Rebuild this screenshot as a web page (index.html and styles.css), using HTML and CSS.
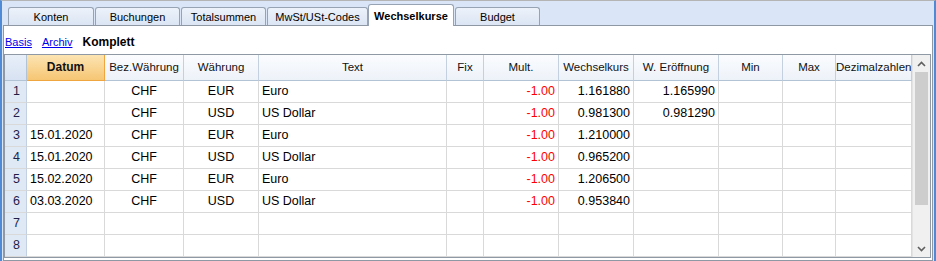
FILE: index.html
```html
<!DOCTYPE html>
<html lang="de">
<head>
    <meta charset="UTF-8">
    <meta name="viewport" content="width=device-width, initial-scale=1.0">
    <title>Wechselkurse</title>
    <link rel="stylesheet" href="styles.css">
</head>
<body>
    <div class="window">
        <div class="tabs">
            <div class="tab tab-first">Konten</div>
            <div class="tab">Buchungen</div>
            <div class="tab">Totalsummen</div>
            <div class="tab tab-wide">MwSt/USt-Codes</div>
            <div class="tab active">Wechselkurse</div>
            <div class="tab">Budget</div>
        </div>

        <div class="panel">
            <div class="views">
                <a href="#">Basis</a>
                <a href="#">Archiv</a>
                <span class="current">Komplett</span>
            </div>

            <div class="grid-frame">
                <div class="grid">
                    <div class="hd corner"></div>
                    <div class="hd sorted">Datum</div>
                    <div class="hd">Bez.Währung</div>
                    <div class="hd">Währung</div>
                    <div class="hd">Text</div>
                    <div class="hd">Fix</div>
                    <div class="hd">Mult.</div>
                    <div class="hd">Wechselkurs</div>
                    <div class="hd">W. Eröffnung</div>
                    <div class="hd">Min</div>
                    <div class="hd">Max</div>
                    <div class="hd">Dezimalzahlen</div>

                    <div class="cell rownum">1</div>
                    <div class="cell"></div>
                    <div class="cell center">CHF</div>
                    <div class="cell center">EUR</div>
                    <div class="cell">Euro</div>
                    <div class="cell"></div>
                    <div class="cell right neg">-1.00</div>
                    <div class="cell right">1.161880</div>
                    <div class="cell right">1.165990</div>
                    <div class="cell"></div>
                    <div class="cell"></div>
                    <div class="cell"></div>

                    <div class="cell rownum">2</div>
                    <div class="cell"></div>
                    <div class="cell center">CHF</div>
                    <div class="cell center">USD</div>
                    <div class="cell">US Dollar</div>
                    <div class="cell"></div>
                    <div class="cell right neg">-1.00</div>
                    <div class="cell right">0.981300</div>
                    <div class="cell right">0.981290</div>
                    <div class="cell"></div>
                    <div class="cell"></div>
                    <div class="cell"></div>

                    <div class="cell rownum">3</div>
                    <div class="cell">15.01.2020</div>
                    <div class="cell center">CHF</div>
                    <div class="cell center">EUR</div>
                    <div class="cell">Euro</div>
                    <div class="cell"></div>
                    <div class="cell right neg">-1.00</div>
                    <div class="cell right">1.210000</div>
                    <div class="cell"></div>
                    <div class="cell"></div>
                    <div class="cell"></div>
                    <div class="cell"></div>

                    <div class="cell rownum">4</div>
                    <div class="cell">15.01.2020</div>
                    <div class="cell center">CHF</div>
                    <div class="cell center">USD</div>
                    <div class="cell">US Dollar</div>
                    <div class="cell"></div>
                    <div class="cell right neg">-1.00</div>
                    <div class="cell right">0.965200</div>
                    <div class="cell"></div>
                    <div class="cell"></div>
                    <div class="cell"></div>
                    <div class="cell"></div>

                    <div class="cell rownum">5</div>
                    <div class="cell">15.02.2020</div>
                    <div class="cell center">CHF</div>
                    <div class="cell center">EUR</div>
                    <div class="cell">Euro</div>
                    <div class="cell"></div>
                    <div class="cell right neg">-1.00</div>
                    <div class="cell right">1.206500</div>
                    <div class="cell"></div>
                    <div class="cell"></div>
                    <div class="cell"></div>
                    <div class="cell"></div>

                    <div class="cell rownum">6</div>
                    <div class="cell">03.03.2020</div>
                    <div class="cell center">CHF</div>
                    <div class="cell center">USD</div>
                    <div class="cell">US Dollar</div>
                    <div class="cell"></div>
                    <div class="cell right neg">-1.00</div>
                    <div class="cell right">0.953840</div>
                    <div class="cell"></div>
                    <div class="cell"></div>
                    <div class="cell"></div>
                    <div class="cell"></div>

                    <div class="cell rownum">7</div>
                    <div class="cell"></div>
                    <div class="cell"></div>
                    <div class="cell"></div>
                    <div class="cell"></div>
                    <div class="cell"></div>
                    <div class="cell"></div>
                    <div class="cell"></div>
                    <div class="cell"></div>
                    <div class="cell"></div>
                    <div class="cell"></div>
                    <div class="cell"></div>

                    <div class="cell rownum">8</div>
                    <div class="cell"></div>
                    <div class="cell"></div>
                    <div class="cell"></div>
                    <div class="cell"></div>
                    <div class="cell"></div>
                    <div class="cell"></div>
                    <div class="cell"></div>
                    <div class="cell"></div>
                    <div class="cell"></div>
                    <div class="cell"></div>
                    <div class="cell"></div>
                </div>
                <div class="scrollbar">
                    <div class="scroll-btn">
                        <svg width="9" height="6" viewBox="0 0 9 6"><polyline points="1,5 4.5,1.5 8,5" fill="none" stroke="#5f5f5f" stroke-width="1.6"/></svg>
                    </div>
                    <div class="scroll-track">
                        <div class="scroll-thumb"></div>
                    </div>
                    <div class="scroll-btn">
                        <svg width="9" height="6" viewBox="0 0 9 6"><polyline points="1,1 4.5,4.5 8,1" fill="none" stroke="#5f5f5f" stroke-width="1.6"/></svg>
                    </div>
                </div>
            </div>
        </div>
    </div>
</body>
</html>
```

FILE: styles.css
```css
body {
    margin: 0;
    font-family: "Liberation Sans", Arial, sans-serif;
    background: #fff;
    overflow: hidden;
}

.window {
    width: 936px;
    height: 261px;
    box-sizing: border-box;
    background-color: #dae6f8;
    border-top: 1px solid #b4b4b4;
    border-left: 2px solid #4f8ad6;
    border-right: 2px solid #4f8ad6;
}

/* tab strip */
.tabs {
    display: flex;
    align-items: flex-end;
    gap: 1px;
    height: 24px;
    padding-left: 6px;
}
.tab {
    width: 85px;
    height: 18px;
    box-sizing: border-box;
    border: 1px solid #97a3b3;
    border-bottom: none;
    border-radius: 3px 3px 0 0;
    background: linear-gradient(#edf2fa, #dbe5f4);
    font-size: 11px;
    line-height: 18px;
    text-align: center;
    color: #000;
}
.tab-first {
    width: 86px;
}
.tab-wide {
    width: 101px;
}
.tab.active {
    position: relative;
    width: 86px;
    height: 22px;
    margin-left: -1px;
    margin-bottom: -1px;
    background: #fff;
    font-weight: bold;
    line-height: 22px;
}

.panel {
    height: 236px;
    margin: 0 1px;
    box-sizing: border-box;
    border: 1px solid #8e98a5;
    background-color: #fff;
}

/* view switch */
.views {
    display: flex;
    align-items: flex-end;
    gap: 10px;
    height: 28px;
    box-sizing: border-box;
    padding: 0 0 5px 1px;
    font-size: 11px;
    line-height: 13px;
}
.views a {
    color: #0000ee;
}
.views .current {
    font-size: 12px;
    font-weight: bold;
}

/* table */
.grid-frame {
    display: flex;
    width: 927px;
    box-sizing: border-box;
    border: 1px solid #8f99a6;
}
.grid {
    display: grid;
    grid-template-columns: 22px 78px 79px 75px 188px 37px 75px 75px 85px 64px 53px 76px;
    grid-template-rows: 26px;
    grid-auto-rows: 22px;
    width: 907px;
}
.hd {
    box-sizing: border-box;
    border-right: 1px solid #c3d0e0;
    border-bottom: 1px solid #b3c3d6;
    background: linear-gradient(#fbfcfe, #edf2f9);
    font-size: 11.5px;
    line-height: 25px;
    text-align: center;
    white-space: nowrap;
    overflow: hidden;
    color: #111;
}
.hd.corner {
    background: linear-gradient(#e8eff9, #d7e2f2);
    border-right-color: #b3c3d6;
}
.hd.sorted {
    background: linear-gradient(#fce4b2, #f6c674);
    border-right-color: #f0a640;
    border-bottom-color: #f0a640;
    font-weight: bold;
    font-size: 12px;
}
.cell {
    box-sizing: border-box;
    border-right: 1px solid #d9d9d9;
    border-bottom: 1px solid #d9d9d9;
    padding: 0 3px;
    font-size: 12.5px;
    line-height: 21px;
    white-space: nowrap;
    overflow: hidden;
    color: #000;
}
.center {
    text-align: center;
}
.right {
    text-align: right;
}
.neg {
    color: #ff0000;
}
.cell.rownum {
    background-color: #dfe8f5;
    border-right-color: #c3d0e0;
    padding: 0 0 0 8px;
    color: #1e1e48;
}

/* scrollbar */
.scrollbar {
    display: flex;
    flex-direction: column;
    width: 18px;
    background-color: #f0f0f0;
    border-left: 1px solid #e3e3e3;
    box-sizing: border-box;
}
.scroll-btn {
    display: flex;
    align-items: center;
    justify-content: center;
    height: 17px;
}
.scroll-track {
    flex: 1;
    padding: 0 2px;
}
.scroll-thumb {
    height: 133px;
    background-color: #cdcdcd;
}
```
